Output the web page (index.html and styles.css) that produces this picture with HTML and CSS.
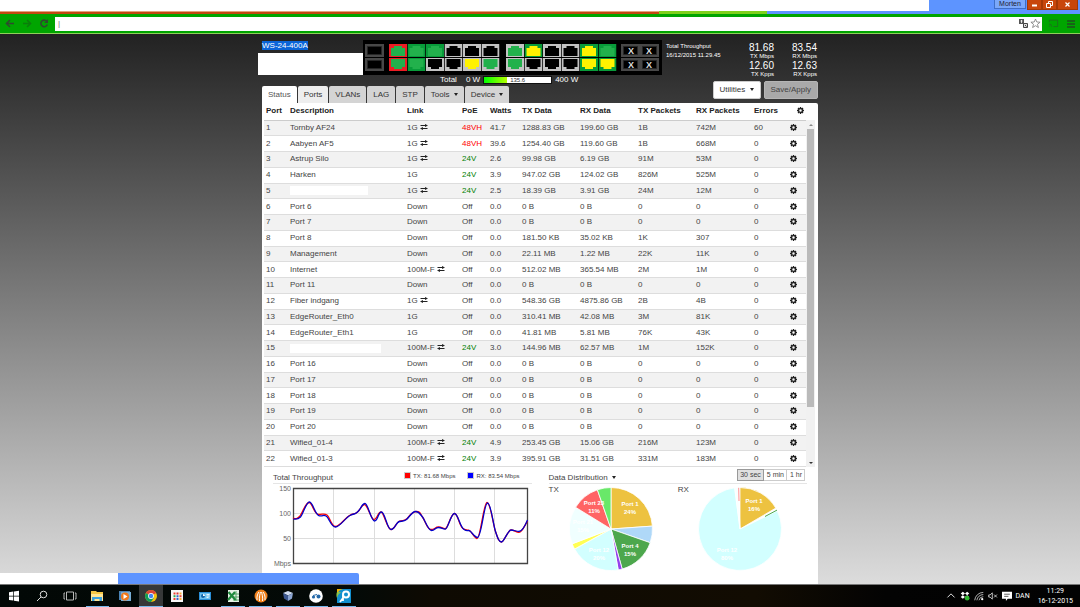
FILE: index.html
```html
<!DOCTYPE html>
<html lang="en">
<head>
<meta charset="utf-8">
<title>WS-24-400A</title>
<link rel="stylesheet" href="styles.css">
</head>
<body>
<svg class="defs" aria-hidden="true">
  <symbol id="swap" viewBox="0 0 16 12"><path d="M1 3h11M4 9h11" stroke="currentColor" stroke-width="2" fill="none"/><path d="M10 0l6 3-6 3zM6 6L0 9l6 3z" fill="currentColor"/></symbol>
  <symbol id="gear" viewBox="0 0 14 14"><circle cx="7" cy="7" r="3.900" fill="none" stroke="currentColor" stroke-width="2.800"/><path d="M7 0v3M7 11v3M0 7h3M11 7h3M2 2l2 2M10 10l2 2M12 2l-2 2M4 10l-2 2" stroke="currentColor" stroke-width="2.600"/></symbol>
  <symbol id="socket" viewBox="0 0 18 13"><path d="M0 0h18v13H0z"/><path class="hole" d="M2 4h3V2h8v2h3v8H2z"/></symbol>
  <symbol id="socket-down" viewBox="0 0 18 13"><path d="M0 0h18v13H0z"/><path class="hole" d="M2 9h3v2h8V9h3V1H2z"/></symbol>
  <symbol id="sfp" viewBox="0 0 19 13"><path d="M0 0h19v13H0z" fill="#484848"/><path d="M2.500 2.500h14v8h-14z" fill="#000" stroke="#262626"/></symbol>
</svg>

<header class="browser">
  <div class="tabstrip">
    <div class="strip-cover"></div>
    <div class="window-controls">
      <button class="profile">Morten</button>
      <button class="win" aria-label="Minimize"><svg width="9" height="7" viewBox="0 0 9 7"><path d="M2 4.500h5" stroke="#fff" stroke-width="2"/></svg></button>
      <button class="win" aria-label="Restore"><svg width="9" height="7" viewBox="0 0 9 7"><path d="M3.500 2V.5h4v4H6M1.500 2.500h4v4h-4z" stroke="#fff" fill="none"/></svg></button>
      <button class="win wide" aria-label="Close"><svg width="9" height="7" viewBox="0 0 9 7"><path d="M2.500 1.500l4 4M6.500 1.500l-4 4" stroke="#fff" stroke-width="1.200"/></svg></button>
    </div>
    <div class="tab-edges"><span class="edge-orange"></span><span class="edge-lime"></span></div>
  </div>
  <div class="toolbar">
    <button class="tool" aria-label="Back"><svg width="10" height="9" viewBox="0 0 10 9"><path d="M9 4.500H2M5 1L1.500 4.500 5 8" stroke="#2e4a2e" stroke-width="1.600" fill="none"/></svg></button>
    <button class="tool" aria-label="Forward"><svg width="10" height="9" viewBox="0 0 10 9"><path d="M1 4.500h7M5 1l3.500 3.500L5 8" stroke="#0b7d0b" stroke-width="1.600" fill="none"/></svg></button>
    <button class="tool" aria-label="Reload"><svg width="10" height="9" viewBox="0 0 10 9"><path d="M7.800 2.400A3.300 3.300 0 1 0 8.300 5.500" stroke="#2e4a2e" stroke-width="1.600" fill="none"/><path d="M9 0v4H5z" fill="#2e4a2e"/></svg></button>
    <div class="address">
      <input type="text" value="|" aria-label="Address">
      <svg width="9" height="9" viewBox="0 0 9 9"><path d="M0 0h5v5H0z" fill="#555"/><path d="M1.500 2h2M2.500 1v3" stroke="#fff" stroke-width=".8"/><path d="M4.500 4.500h4v4h-4z" fill="#ddd" stroke="#444"/><path d="M6 6l1.500 1.500" stroke="#444"/></svg>
      <svg width="11" height="11" viewBox="0 0 11 11"><path d="M5.500 1l1.300 3 3.300.2-2.600 2.100.9 3.200-2.900-1.800-2.900 1.800.9-3.200L.9 4.200l3.300-.2z" fill="#fff" stroke="#777" stroke-width=".8"/></svg>
    </div>
    <button class="tool" aria-label="Cast"><svg width="12" height="9" viewBox="0 0 12 9"><path d="M1.500 3V.8h9v7H6M1 5a3 3 0 0 1 3 3M1 7.500h1" stroke="#1d6e1d" fill="none"/></svg></button>
    <button class="tool" aria-label="Menu"><svg width="8" height="8" viewBox="0 0 8 8"><path d="M0 1h8M0 4h8M0 7h8" stroke="#1f4f1f" stroke-width="1.600"/></svg></button>
  </div>
</header>

<main class="page">
  <div class="console">
    <div class="masthead">
      <div class="mast-left">
        <div class="device">
          <div class="device-id">
            <h1><span class="selected">WS-24-400A</span></h1>
            <div class="cover"></div>
          </div>
          <svg class="faceplate" width="299" height="35" viewBox="0 0 299 35" role="img" aria-label="Switch ports">
            <rect width="299" height="35" fill="#000"/>
            <use href="#sfp" x="2" y="4" width="19" height="13"/><use href="#sfp" x="2" y="18" width="19" height="13"/>
            <g transform="translate(26 4)">
              <use class="red link" href="#socket" x="0" width="18" height="13"/><use class="green link" href="#socket" x="18.500" width="18" height="13"/><use class="green link" href="#socket" x="37" width="18" height="13"/><use class="gray" href="#socket" x="55.500" width="18" height="13"/><use class="gray" href="#socket" x="74" width="18" height="13"/><use class="gray" href="#socket" x="92.500" width="18" height="13"/>
              <use class="gray link" href="#socket" x="117" width="18" height="13"/><use class="green slow" href="#socket" x="135.500" width="18" height="13"/><use class="gray" href="#socket" x="154" width="18" height="13"/><use class="gray" href="#socket" x="172.500" width="18" height="13"/><use class="green slow" href="#socket" x="191" width="18" height="13"/><use class="green link" href="#socket" x="209.500" width="18" height="13"/>
            </g>
            <g transform="translate(26 18)">
              <use class="red link" href="#socket-down" x="0" width="18" height="13"/><use class="green link" href="#socket-down" x="18.500" width="18" height="13"/><use class="gray" href="#socket-down" x="37" width="18" height="13"/><use class="gray" href="#socket-down" x="55.500" width="18" height="13"/><use class="gray slow" href="#socket-down" x="74" width="18" height="13"/><use class="gray link" href="#socket-down" x="92.500" width="18" height="13"/>
              <use class="gray link" href="#socket-down" x="117" width="18" height="13"/><use class="gray" href="#socket-down" x="135.500" width="18" height="13"/><use class="gray" href="#socket-down" x="154" width="18" height="13"/><use class="gray" href="#socket-down" x="172.500" width="18" height="13"/><use class="green slow" href="#socket-down" x="191" width="18" height="13"/><use class="green slow" href="#socket-down" x="209.500" width="18" height="13"/>
            </g>
            <use href="#sfp" x="258" y="4" width="19" height="13"/><use href="#sfp" x="277" y="4" width="19" height="13"/><use href="#sfp" x="258" y="18" width="19" height="13"/><use href="#sfp" x="277" y="18" width="19" height="13"/>
            <g class="sfp-mark"><text x="268" y="14">X</text><text x="286" y="14">X</text><text x="268" y="28">X</text><text x="286" y="28">X</text></g>
          </svg>
        </div>
        <div class="power"><span class="power-label">Total</span><span>0 W</span><div class="power-bar"><span class="power-fill"></span><span class="power-value">135.6</span></div><span>400 W</span></div>
        <nav class="tabs">
          <button class="tab active">Status</button><button class="tab hover">Ports</button><button class="tab">VLANs</button><button class="tab">LAG</button><button class="tab">STP</button><button class="tab">Tools <i class="caret"></i></button><button class="tab">Device <i class="caret"></i></button>
        </nav>
      </div>
      <div class="mast-right">
        <div class="stats">
          <div class="stamp">Total Throughput<br>16/12/2015 11.29.45</div>
          <div class="rates">
            <div class="rate"><b>81.68</b><span>TX Mbps</span></div><div class="rate"><b>83.54</b><span>RX Mbps</span></div>
            <div class="rate"><b>12.60</b><span>TX Kpps</span></div><div class="rate"><b>12.63</b><span>RX Kpps</span></div>
          </div>
        </div>
        <div class="actions"><button class="action">Utilities <i class="caret"></i></button><button class="action disabled">Save/Apply</button></div>
      </div>
    </div>

    <section class="panel">
      <div class="table-wrap">
        <table class="ports">
          <colgroup><col class="c-port"><col><col class="c-link"><col class="c-poe"><col class="c-watts"><col class="c-data"><col class="c-data"><col class="c-data"><col class="c-data"><col class="c-err"><col class="c-gear"></colgroup>
          <thead><tr><th>Port<th>Description<th>Link<th>PoE<th>Watts<th>TX Data<th>RX Data<th>TX Packets<th>RX Packets<th>Errors<th class="last"><svg class="gear"><use href="#gear"/></svg></tr></thead>
          <tbody>
          <tr><td>1<td>Tornby AF24<td>1G <svg class="swap"><use href="#swap"/></svg><td class="high">48VH<td>41.7<td>1288.83 GB<td>199.60 GB<td>1B<td>742M<td>60<td><svg class="gear"><use href="#gear"/></svg></tr>
          <tr><td>2<td>Aabyen AF5<td>1G <svg class="swap"><use href="#swap"/></svg><td class="high">48VH<td>39.6<td>1254.40 GB<td>119.60 GB<td>1B<td>668M<td>0<td><svg class="gear"><use href="#gear"/></svg></tr>
          <tr><td>3<td>Astrup Silo<td>1G <svg class="swap"><use href="#swap"/></svg><td class="on">24V<td>2.6<td>99.98 GB<td>6.19 GB<td>91M<td>53M<td>0<td><svg class="gear"><use href="#gear"/></svg></tr>
          <tr><td>4<td>Harken<td>1G<td class="on">24V<td>3.9<td>947.02 GB<td>124.02 GB<td>826M<td>525M<td>0<td><svg class="gear"><use href="#gear"/></svg></tr>
          <tr><td>5<td><span class="blank"></span><td>1G <svg class="swap"><use href="#swap"/></svg><td class="on">24V<td>2.5<td>18.39 GB<td>3.91 GB<td>24M<td>12M<td>0<td><svg class="gear"><use href="#gear"/></svg></tr>
          <tr><td>6<td>Port 6<td>Down<td>Off<td>0.0<td>0 B<td>0 B<td>0<td>0<td>0<td><svg class="gear"><use href="#gear"/></svg></tr>
          <tr><td>7<td>Port 7<td>Down<td>Off<td>0.0<td>0 B<td>0 B<td>0<td>0<td>0<td><svg class="gear"><use href="#gear"/></svg></tr>
          <tr><td>8<td>Port 8<td>Down<td>Off<td>0.0<td>181.50 KB<td>35.02 KB<td>1K<td>307<td>0<td><svg class="gear"><use href="#gear"/></svg></tr>
          <tr><td>9<td>Management<td>Down<td>Off<td>0.0<td>22.11 MB<td>1.22 MB<td>22K<td>11K<td>0<td><svg class="gear"><use href="#gear"/></svg></tr>
          <tr><td>10<td>Internet<td>100M-F <svg class="swap"><use href="#swap"/></svg><td>Off<td>0.0<td>512.02 MB<td>365.54 MB<td>2M<td>1M<td>0<td><svg class="gear"><use href="#gear"/></svg></tr>
          <tr><td>11<td>Port 11<td>Down<td>Off<td>0.0<td>0 B<td>0 B<td>0<td>0<td>0<td><svg class="gear"><use href="#gear"/></svg></tr>
          <tr><td>12<td>Fiber indgang<td>1G <svg class="swap"><use href="#swap"/></svg><td>Off<td>0.0<td>548.36 GB<td>4875.86 GB<td>2B<td>4B<td>0<td><svg class="gear"><use href="#gear"/></svg></tr>
          <tr><td>13<td>EdgeRouter_Eth0<td>1G<td>Off<td>0.0<td>310.41 MB<td>42.08 MB<td>3M<td>81K<td>0<td><svg class="gear"><use href="#gear"/></svg></tr>
          <tr><td>14<td>EdgeRouter_Eth1<td>1G<td>Off<td>0.0<td>41.81 MB<td>5.81 MB<td>76K<td>43K<td>0<td><svg class="gear"><use href="#gear"/></svg></tr>
          <tr><td>15<td><span class="blank long"></span><td>100M-F <svg class="swap"><use href="#swap"/></svg><td class="on">24V<td>3.0<td>144.96 MB<td>62.57 MB<td>1M<td>152K<td>0<td><svg class="gear"><use href="#gear"/></svg></tr>
          <tr><td>16<td>Port 16<td>Down<td>Off<td>0.0<td>0 B<td>0 B<td>0<td>0<td>0<td><svg class="gear"><use href="#gear"/></svg></tr>
          <tr><td>17<td>Port 17<td>Down<td>Off<td>0.0<td>0 B<td>0 B<td>0<td>0<td>0<td><svg class="gear"><use href="#gear"/></svg></tr>
          <tr><td>18<td>Port 18<td>Down<td>Off<td>0.0<td>0 B<td>0 B<td>0<td>0<td>0<td><svg class="gear"><use href="#gear"/></svg></tr>
          <tr><td>19<td>Port 19<td>Down<td>Off<td>0.0<td>0 B<td>0 B<td>0<td>0<td>0<td><svg class="gear"><use href="#gear"/></svg></tr>
          <tr><td>20<td>Port 20<td>Down<td>Off<td>0.0<td>0 B<td>0 B<td>0<td>0<td>0<td><svg class="gear"><use href="#gear"/></svg></tr>
          <tr><td>21<td>Wified_01-4<td>100M-F <svg class="swap"><use href="#swap"/></svg><td class="on">24V<td>4.9<td>253.45 GB<td>15.06 GB<td>216M<td>123M<td>0<td><svg class="gear"><use href="#gear"/></svg></tr>
          <tr><td>22<td>Wified_01-3<td>100M-F <svg class="swap"><use href="#swap"/></svg><td class="on">24V<td>3.9<td>395.91 GB<td>31.51 GB<td>331M<td>183M<td>0<td><svg class="gear"><use href="#gear"/></svg></tr>
          </tbody>
        </table>
        <div class="scrollbar"><i class="arrow up"></i><div class="thumb"></div><i class="arrow down"></i></div>
      </div>

      <div class="charts">
        <div class="chart">
          <div class="chart-head"><h2>Total Throughput</h2><span class="key"><i class="swatch tx"></i>TX: 81.68 Mbps</span><span class="key"><i class="swatch rx"></i>RX: 83.54 Mbps</span></div>
          <svg class="plot" width="258" height="88" viewBox="0 0 258 88">
            <path d="M60.500 5v74M101.500 5v74M141.500 5v74M181.500 5v74M221.500 5v74M20 29.500h234M20 54.500h234" stroke="#ddd" fill="none"/>
            <path d="M20.500 4.500h234v75h-234z" fill="none" stroke="#444" stroke-width="1.300"/>
            <path class="line tx" d="M20 34 C23 35 24 35 26.500 32.500 S32.500 18.500 36 18.500 S41 30.500 45.500 30.500 S51 29 54 31 S58 42.500 62.500 42.500 S72 34 76.500 31.500 S81 31 84.500 28 S88.500 20.500 91.500 20.500 S98 35.500 101 35.500 S105 28 108 28 S114 45.500 118 45.500 S123 38 126.500 37 S131 37.500 133.500 35 S139 27.500 143.500 27.500 S147 30 149.500 33 S154 45.500 158 45.500 S162 43 165.500 43 S170 45 172.500 44.500 S178 29.500 181.500 29.500 S186 42 190 44.500 S195 45.500 197 47 S202 54.500 204 54.500 C207.500 54.500 210.500 18.500 214 18.500 S220 40 222.500 47.500 S226 58 228.500 58 S235 46 238 46 S243 48.300 246 48.300 S251 43 254.500 37"/>
            <path class="line rx" d="M20.500 35 C23 35.500 25 35.500 27.500 33 S33 18 36.500 18 S42 31.500 46.500 31.800 S50 30.500 53 32 S58 43 62.500 43 S72 34 77 31.500 S81 31 84.500 28 S89 19.500 92 19.500 S98 37 101.500 37 S105 28 108.500 28 S114 45.500 118 45.500 S123 38 126.500 37.500 S131 37.500 133.500 35.500 S139 27.500 142.500 27.500 S147 30 149.500 33 S155 46.500 158.500 46.500 S162 43.500 165.500 43.500 S170 45.500 172.500 45 S178 29.500 181.500 29.500 S187 43 191 45.500 S195 45.500 197 47 S202 53.500 204.500 53.500 C208.500 53.500 211 19 214.500 19 S220 40 222.500 47.500 S226 58 228.500 58 S235 46 238 46 S243 47.500 246 47.500 S252 42 254.500 36"/>
            <g class="axis"><text x="18" y="7">150</text><text x="18" y="32">100</text><text x="18" y="57">50</text><text x="18" y="82">Mbps</text></g>
          </svg>
        </div>
        <div class="chart">
          <div class="chart-head"><h2>Data Distribution <i class="caret"></i></h2><div class="periods"><button class="on">30 sec</button><button>5 min</button><button>1 hr</button></div></div>
          <div class="pies">
            <figure><figcaption>TX</figcaption>
              <svg class="pie" width="84" height="84" viewBox="0 0 84 84">
                <path fill="#edc240" d="M42 42V.5A41.500 41.500 0 0 1 83.400 39.100z"/>
                <path fill="#afd8f8" d="M42 42L83.400 39.100A41.500 41.500 0 0 1 81.200 55.700z"/>
                <path fill="#4da74d" d="M42 42L81.200 55.700A41.500 41.500 0 0 1 53.200 82z"/>
                <path fill="#9440ed" d="M42 42L53.200 82A41.500 41.500 0 0 1 49.200 82.900z"/>
                <path fill="#d2ffff" d="M42 42L49.200 82.900A41.500 41.500 0 0 1 5.600 62z"/>
                <path fill="#ffff55" d="M42 42L5.600 62A41.500 41.500 0 0 1 3.200 56.800z"/>
                <path fill="#f0ffff" d="M42 42L3.200 56.800A41.500 41.500 0 0 1 6.600 20.300z"/>
                <path fill="#ff6464" d="M42 42L6.600 20.300A41.500 41.500 0 0 1 28.400 2.800z"/>
                <path fill="#69e869" d="M42 42L28.400 2.800A41.500 41.500 0 0 1 42 .5z"/>
                <g class="slice-label"><text x="61" y="19">Port 1</text><text x="61" y="27">24%</text><text x="61" y="61">Port 4</text><text x="61" y="69">15%</text><text x="30" y="65">Port 12</text><text x="30" y="73">20%</text><text x="14" y="37">Port 21</text><text x="14" y="45">15%</text><text x="25" y="18">Port 23</text><text x="25" y="26">11%</text></g>
              </svg>
            </figure>
            <figure><figcaption>RX</figcaption>
              <svg class="pie" width="84" height="84" viewBox="0 0 84 84">
                <path fill="#edc240" d="M42 42V.5A41.500 41.500 0 0 1 77.800 21.100z"/>
                <path fill="#d2ffff" d="M42 42L79.300 23.800A41.500 41.500 0 1 1 36.700 .8z"/>
                <path fill="#f8ffff" d="M42 42L36.700 .8A41.500 41.500 0 0 1 40.200 .5z"/>
                <path class="hair" d="M67 29.500L79 23.100"/>
                <path class="hair" d="M41 14L40.700 .8"/>
                <g class="slice-label"><text x="56" y="16">Port 1</text><text x="56" y="24">16%</text><text x="29" y="65">Port 12</text><text x="29" y="73">80%</text></g>
              </svg>
            </figure>
          </div>
        </div>
      </div>
    </section>
  </div>
  <div class="status-cover"><span class="plain"></span><span class="blue"></span></div>
</main>

<footer class="taskbar">
  <div class="apps">
    <button class="app" aria-label="Start"><svg viewBox="0 0 16 16"><path d="M3 4.200L7.300 3.500v4.200H3zM8 3.400l5-.7v5H8zM3 8.400h4.300v4.200L3 12zM8 8.400h5v5l-5-.7z" fill="#fff"/></svg></button>
    <button class="app" aria-label="Search"><svg viewBox="0 0 16 16"><circle cx="9.500" cy="6.500" r="3.300" fill="none" stroke="#ddd"/><path d="M7 9l-4 4" stroke="#ddd"/></svg></button>
    <button class="app" aria-label="Task view"><svg viewBox="0 0 16 16"><path d="M4.500 4h7v8h-7zM3 5H2v6h1M13 5h1v6h-1" fill="none" stroke="#ccc" stroke-width=".9"/></svg></button>
    <button class="app open" aria-label="File Explorer"><svg viewBox="0 0 16 16"><path d="M2 3h5l1 1h6v9H2z" fill="#f5c644"/><path d="M2 6h12v7H2z" fill="#ffe594"/><path d="M3 13V9h10v4h-2.500v-2h-5v2z" fill="#3ba0dc"/></svg></button>
    <button class="app" aria-label="Media Player"><svg viewBox="0 0 16 16"><path d="M2 3h11v9H2z" fill="#4a83b5"/><path d="M4 4h10v9H4z" fill="#78aed6"/><circle cx="8" cy="8.500" r="4" fill="#f07818"/><path d="M6.500 6l4 2.500-4 2.500z" fill="#fff"/></svg></button>
    <button class="app open current" aria-label="Chrome"><svg viewBox="0 0 16 16"><circle cx="8" cy="8" r="6" fill="#f4c20d"/><path d="M8 8L2.800 5A6 6 0 0 1 13.200 5z" fill="#db4437"/><path d="M8 8L2.800 5A6 6 0 0 0 8 14l3-4.300z" fill="#0f9d58"/><circle cx="8" cy="8" r="2.900" fill="#fff"/><circle cx="8" cy="8" r="2.200" fill="#4285f4"/></svg></button>
    <button class="app" aria-label="Apps"><svg viewBox="0 0 16 16"><path d="M2 2h12v12H2z" fill="#f8f8f8"/><path d="M4.500 4.500h2v2h-2zM4.500 10h2v2h-2z" fill="#e43"/><path d="M7.500 4.500h2v2h-2z" fill="#d33"/><path d="M10.500 4.500h2v2h-2zM10.500 10h2v2h-2z" fill="#fa3"/><path d="M4.500 7.200h2v2h-2z" fill="#3a5"/><path d="M7.500 7.200h2v2h-2zM7.500 10h2v2h-2z" fill="#36c"/><path d="M10.500 7.200h2v2h-2z" fill="#e43"/></svg></button>
    <button class="app" aria-label="Control Panel"><svg viewBox="0 0 16 16"><path d="M2 4h12v8H2z" fill="#2a8fd8"/><path d="M3 5h10v6H3z" fill="#6cc0f0"/><circle cx="6" cy="8" r="2" fill="#1565a8"/><path d="M6 8V6a2 2 0 0 1 2 2z" fill="#fff"/><path d="M9.500 6.500h3M9.500 8h3M9.500 9.500h2" stroke="#fff" stroke-width=".8"/></svg></button>
    <button class="app open" aria-label="Excel"><svg viewBox="0 0 16 16"><path d="M3 2h11v12H3z" fill="#e6f2e6"/><path d="M11 3v10M8 6h6M8 9h6M8 12h6" stroke="#3c9a50" stroke-width=".8"/><path d="M3.500 4l7 8M10 4l-7 8" stroke="#1f8a3c" stroke-width="2.200"/></svg></button>
    <button class="app open" aria-label="Wireless tool"><svg viewBox="0 0 16 16"><circle cx="8" cy="8" r="6.500" fill="#f0801a"/><path d="M4 12C3.500 8 5 5 6 4M6.500 13C6 9 7 6 7.500 4M9.500 13C10 9 9 6 8.500 4M12 12C12.500 8 11 5 10 4" stroke="#fff" fill="none"/></svg></button>
    <button class="app open" aria-label="VirtualBox"><svg viewBox="0 0 16 16"><path d="M8 3l5 2-5 2.500L3 5z" fill="#cfdcf0"/><path d="M3 5l5 2.500V13l-4-2.500z" fill="#3c5890"/><path d="M13 5L8 7.500V13l4-2.500z" fill="#8aa4d0"/></svg></button>
    <button class="app open" aria-label="Remote"><svg viewBox="0 0 16 16"><circle cx="8" cy="8" r="6.800" fill="#fff"/><circle cx="5.500" cy="9" r="1.600" fill="#2468a8"/><circle cx="10.500" cy="8.500" r="2" fill="#2468a8"/><path d="M5 7.500l4-1" stroke="#2468a8"/></svg></button>
    <button class="app open" aria-label="PRTG"><svg viewBox="0 0 16 16"><path d="M1 1h14v14H1z" fill="#1290cf"/><path d="M1 1h6a8 8 0 0 0-6 6z" fill="#f4b400"/><path d="M1 4a8 8 0 0 0 0 6 10 10 0 0 1 4-6z" fill="#8bc34a"/><circle cx="10" cy="6.500" r="3" fill="none" stroke="#fff" stroke-width="2"/><path d="M7 7v6M7 10L4 14" stroke="#fff" stroke-width="1.800"/></svg></button>
  </div>
  <div class="tray">
    <svg viewBox="0 0 14 14"><path d="M2 9l5-5 5 5" stroke="#ddd" stroke-width="1.400" fill="none"/></svg>
    <svg viewBox="0 0 14 14"><path d="M4 1L7 3.500 4 6 1 3.500zM10 1l3 2.500L10 6 7 3.500zM4 6l3 2.500L4 11 1 8.500zM10 6l3 2.500L10 11 7 8.500z" fill="#fff"/><circle cx="10" cy="10" r="3.300" fill="#2eb82e"/></svg>
    <svg viewBox="0 0 14 14"><path d="M1 13A12 12 0 0 1 13 2M4 13A9 9 0 0 1 13 5M7 13A6 6 0 0 1 13 8" stroke="#bbb" stroke-width="1.300" fill="none"/><circle cx="11.500" cy="11.500" r="1.600" fill="#fff"/></svg>
    <svg viewBox="0 0 14 14"><path d="M1 5.500h2l3-3v9l-3-3H1zM8.500 5l4 4M12.500 5l-4 4" stroke="#ddd" stroke-width="1.200" fill="none"/></svg>
    <svg viewBox="0 0 14 14"><path d="M0 1h14v10H8l-2.500 3v-3H0z" fill="#fff"/><path d="M3 4.500h8M3 7.500h6" stroke="#222"/></svg>
    <span class="lang">DAN</span>
    <span class="clock">11:29<br>16-12-2015</span>
  </div>
</footer>
</body>
</html>
```
FILE: styles.css
```css
* { box-sizing: border-box; }
body {
  margin: 0;
  min-height: 100vh;
  display: flex;
  flex-direction: column;
  font: 8px/12px "Liberation Sans", Arial, sans-serif;
  color: #444;
}
button, input { font: inherit; color: inherit; margin: 0; padding: 0; border: 0; background: none; }
h1, h2, figure { margin: 0; font-size: 8px; font-weight: normal; }
.defs { position: absolute; width: 0; height: 0; }
.caret {
  display: inline-block;
  margin-left: 2px;
  border: 2px solid transparent;
  border-top: 3px solid #222;
  border-bottom: 0;
  vertical-align: 1px;
}

/* Browser frame */
.tabstrip { display: grid; grid-template-columns: 86fr 14fr; grid-template-rows: 11px 3px; background: #5d94ff; }
.strip-cover { background: #fff; }
.window-controls { display: flex; justify-content: flex-end; padding-right: 2px; }
.profile { width: 32px; height: 9px; margin-right: 1px; border: 1px solid #3f6fc8; border-top: 0; background: #7ba8fa; color: #223; font-size: 7px; line-height: 8px; }
.win { display: flex; align-items: center; justify-content: center; width: 15px; height: 10px; background: #c8460c; border: 1px solid #a33806; border-top: 0; }
.win.wide { width: 21px; }
.tab-edges { grid-column: 1 / -1; display: flex; }
.edge-orange { width: 61%; background: #c2480f; border-top: 1px solid #e3a07e; }
.edge-lime { width: 10%; background: #7fd01c; }
.toolbar {
  display: flex;
  align-items: center;
  gap: 6px;
  height: 20px;
  padding: 0 4px;
  background: #00a500;
  border-bottom: 1px solid #8fd05a;
}
.tool { display: flex; justify-content: center; width: 11px; }
.address { flex: 1; display: flex; align-items: center; gap: 2px; height: 14px; padding: 0 1px 0 2px; background: #fff; }
.address input { flex: 1; min-width: 0; color: #777; outline: 0; padding-left: 1px; }

/* Page */
.page { position: relative; flex: 1; display: flex; flex-direction: column; padding-top: 6px; background: linear-gradient(#222, #dcdcdc); }
.console { flex: 1; display: flex; flex-direction: column; width: 556px; max-width: 100%; margin: 0 auto; }
.masthead { display: flex; color: #fff; }
.mast-left { flex: none; width: 400px; }
.mast-right { flex: 1; display: flex; flex-direction: column; justify-content: space-between; padding: 2px 1px 4px 4px; }
.device { display: flex; }
.device-id { flex: 1; padding-top: 1px; }
.device-id h1 { line-height: 9px; }
.selected { background: #0a64d8; }
.cover { height: 22px; margin: 3px 0 0 -4px; background: #fff; }
.faceplate { display: block; flex: none; width: 299px; }
.faceplate use { --hole: #000; }
.hole { fill: var(--hole); }
.faceplate .red { fill: #ed1c24; }
.faceplate .green { fill: #089c3a; }
.faceplate .gray { fill: #c3c3c3; }
.faceplate .link { --hole: #22b14c; }
.faceplate .slow { --hole: #fff200; }
.sfp-mark { font-weight: bold; font-size: 9px; fill: #ddd; text-anchor: middle; }
.power { display: flex; align-items: center; gap: 3px; height: 10px; padding-left: 178px; }
.power-label { margin-right: 6px; }
.power-bar { position: relative; width: 69px; height: 8px; background: #fff; border: 1px solid #111; display: flex; }
.power-fill { width: 34%; background: linear-gradient(90deg, #0f0, #b4ff00); }
.power-value { position: absolute; inset: 0; text-align: center; font-size: 6px; line-height: 6px; color: #333; }
.tabs { display: flex; gap: 1px; margin-top: 1px; }
.tab { height: 17px; padding: 1px 6px 0; border-radius: 2px 2px 0 0; background: #d4d4d4; color: #333; white-space: nowrap; }
.tab.active { background: #fff; color: #555; }
.tab.hover { background: #eee; }
.stats { display: flex; justify-content: space-between; }
.stamp { font-size: 6px; line-height: 9px; white-space: nowrap; }
.rates { display: grid; grid-template-columns: auto auto; column-gap: 18px; text-align: right; }
.rate { display: flex; flex-direction: column; font-size: 6px; line-height: 6px; padding-bottom: 1px; }
.rate b { font-size: 10px; line-height: 11px; font-weight: normal; }
.actions { display: flex; justify-content: flex-end; gap: 3px; margin-right: -1px; }
.action { height: 18px; padding: 0 6px; border: 1px solid #ccc; border-radius: 2px; background: #fff; color: #333; }
.action.disabled { background: #a9a9a9; border-color: #b5b5b5; color: #444; }

/* Port table */
.panel { flex: 1; background: #fff; border-radius: 0 2px 0 0; }
.table-wrap { display: flex; padding: 0 3px 0 2px; }
.ports { flex: 1; height: 364px; table-layout: fixed; border-collapse: collapse; }
.ports th, .ports td { padding: 0 0 0 2px; text-align: left; white-space: nowrap; vertical-align: middle; }
.ports thead tr { height: 17px; }
.ports th { color: #222; border-bottom: 1px solid #ccc; }
.ports td { border-bottom: 1px solid #ddd; }
.ports tbody tr:nth-child(odd) { background: #f2f2f2; }
.ports .high { color: #f00; }
.ports .on { color: #008000; }
.ports .last { text-align: right; padding-right: 2px; }
.c-port { width: 24px; }
.c-link { width: 55px; }
.c-poe { width: 28px; }
.c-watts { width: 32px; }
.c-data { width: 58px; }
.c-err { width: 36px; }
.c-gear { width: 18px; }
.swap { width: 8px; height: 6px; color: #222; }
.gear { width: 7px; height: 7px; color: #222; vertical-align: -1px; }
.blank { display: block; width: 78px; height: 9px; background: #fff; }
.blank.long { width: 91px; }
.scrollbar { display: flex; flex-direction: column; align-items: center; width: 9px; margin-top: 17px; padding: 4px 0 3px; background: #f1f1f1; }
.thumb { width: 7px; height: 278px; margin: 3px 0 auto; background: #bababa; }
.arrow { border: 2px solid transparent; }
.arrow.up { border-top: 0; border-bottom-color: #888; }
.arrow.down { border-bottom: 0; border-top-color: #333; }

/* Charts */
.charts { display: flex; gap: 17px; padding: 0 11px; }
.chart { flex: 1; min-width: 0; }
.chart-head { display: flex; align-items: center; height: 17px; padding-top: 5px; border-bottom: 1px solid #e5e5e5; }
.chart-head h2 { flex: 1; }
.key { display: flex; align-items: center; gap: 2px; margin-right: 12px; font-size: 6px; line-height: 8px; padding-bottom: 4px; }
.swatch { width: 7px; height: 7px; border: 1px solid #ccc; }
.swatch.tx { background: #f00; }
.swatch.rx { background: #00f; }
.plot { display: block; }
.line { fill: none; stroke-width: 1.300px; }
.line.tx { stroke: #f00; }
.line.rx { stroke: #00c; }
.axis { font-size: 7px; fill: #666; text-anchor: end; }
.periods { display: flex; margin: 0 2px 5px 0; }
.periods button { height: 12px; padding: 0 2px 0 3px; border: 1px solid #ccc; border-left-width: 0; font-size: 7px; line-height: 10px; }
.periods .on { background: #e0e0e0; border: 1px solid #999; padding: 0 2px; }
.pies { display: flex; }
.pies figure { flex: 1; display: flex; }
.pies figcaption { width: 20px; line-height: 11px; }
.pie { margin-top: 3px; }
.pie path { stroke: #fff; stroke-width: .8px; }
.pie .hair { stroke-width: 1px; stroke: #4da74d; }
.pie .hair + .hair { stroke: #ff9090; }
.slice-label { font-size: 6px; font-weight: bold; fill: #fff; text-anchor: middle; }
.status-cover { position: absolute; left: 0; bottom: 0; display: flex; height: 11px; }
.status-cover .plain { width: 118px; background: #fff; }
.status-cover .blue { width: 241px; background: #5d94ff; border-radius: 0 2px 0 0; }

/* Taskbar */
.taskbar {
  display: flex;
  justify-content: space-between;
  height: 23px;
  border-top: 1px solid #777;
  background: linear-gradient(90deg, #020806, #040a07 33%, #0e0a02 40%, #120c02 70%, #030303 82%, #020202);
  color: #fff;
}
.apps { display: flex; width: 358px; }
.app { flex: 1; display: flex; align-items: center; justify-content: center; margin: 0 2px; border-bottom: 1px solid transparent; }
.app svg { width: 16px; height: 16px; }
.app.open { border-bottom-color: #76b9ed; }
.app.current { background: #363838; margin: 0; flex-grow: 1; }
.tray { display: flex; align-items: center; gap: 4px; padding-right: 7px; font: 7px/10px Roboto, sans-serif; }
.tray svg { width: 10px; height: 10px; }
.clock { margin-left: 4px; text-align: center; }
```
